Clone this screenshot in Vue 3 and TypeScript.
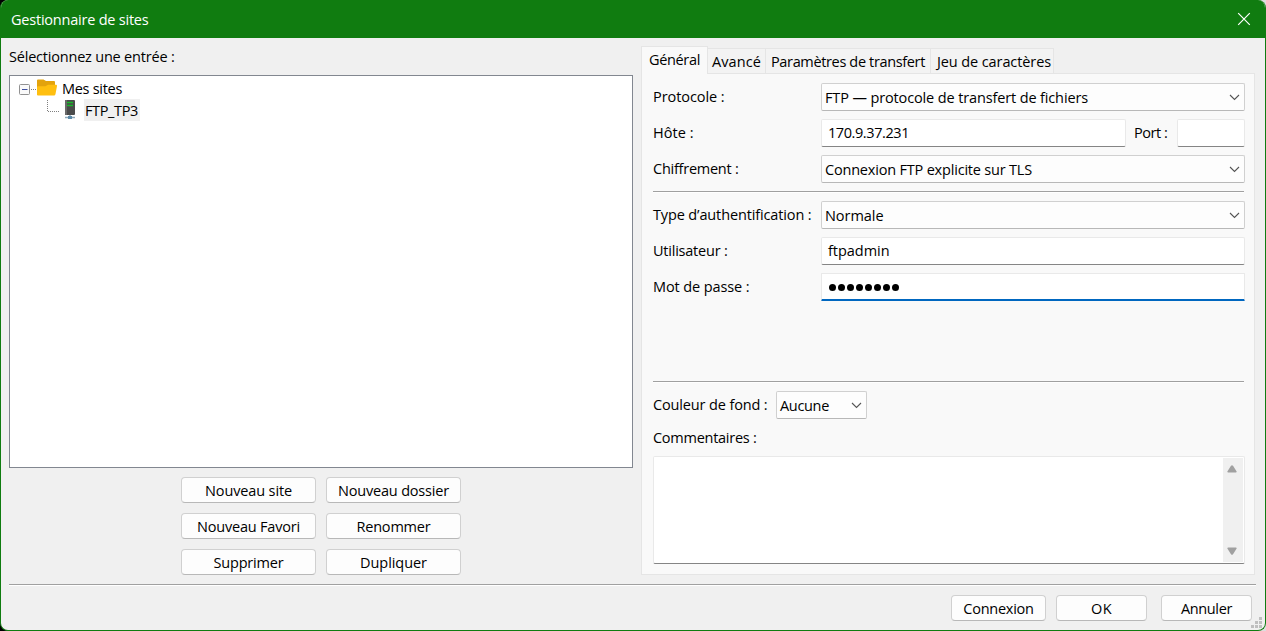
<script setup lang="ts">
import { ref } from 'vue'

interface Label { text: string; w: number }

const tabs: Label[] = [
  { text: 'Général', w: 51 },
  { text: 'Avancé', w: 49 },
  { text: 'Paramètres de transfert', w: 154 },
  { text: 'Jeu de caractères', w: 114 },
]
const activeTab = ref(0)

const siteActions: Label[] = [
  { text: 'Nouveau site', w: 87 },
  { text: 'Nouveau dossier', w: 111 },
  { text: 'Nouveau Favori', w: 103 },
  { text: 'Renommer', w: 74 },
  { text: 'Supprimer', w: 70 },
  { text: 'Dupliquer', w: 67 },
]

// Spreads or tightens a label so that it takes the given width.
const vFit = {
  mounted(el: HTMLElement, binding: { value: number }) {
    const natural = el.getBoundingClientRect().width
    const count = (el.textContent ?? '').length
    if (count) el.style.letterSpacing = `${(binding.value - natural) / count}px`
  },
}
</script>

<template>
  <div class="screen">
    <div class="window">
      <header class="titlebar">
        <span v-fit="137.500" class="t">Gestionnaire de sites</span>
        <svg class="close" width="14" height="14" viewBox="0 0 14 14"><path d="M1.2 1.2L12.8 12.8M12.8 1.2L1.2 12.8" /></svg>
      </header>

      <main class="content">
        <section class="left">
          <div class="prompt"><span v-fit="165.500" class="t">Sélectionnez une entrée :</span></div>
          <div class="tree">
            <div class="node root">
              <svg width="52" height="22" viewBox="0 0 52 22">
                <path class="dots" d="M21 12.5H27" />
                <rect x="9.5" y="7.500" width="10" height="10" rx="1" fill="#fafafa" stroke="#919191" />
                <path d="M12 12.500H17.500" stroke="#4050a0" />
                <path d="M27 3.500q0-1 1-1h5.500l2.500 1.500H44q1 0 1 1V18H28q-1 0-1-1z" fill="#e3a30d" />
                <path d="M27 10.200q0-1 1-1h7.500l2.500-1.500h8q1.200 0 1 1.200L45.500 17q-.3 1.500-1.500 1.500H28q-1 0-1-1.200z" fill="#ffbf10" />
              </svg>
              <span v-fit="60" class="t">Mes sites</span>
            </div>
            <div class="node child">
              <svg width="74" height="22" viewBox="0 0 74 22">
                <path class="dots" d="M37.500 1V12.500H50" />
                <rect x="55" y="1" width="10" height="15" rx="1" fill="#4b4b4b" />
                <rect x="55" y="1" width="2" height="15" fill="#6a6a6a" />
                <path d="M57 3.500H63M57 6.500H63" stroke="#18b92b" stroke-width="1.400" />
                <path d="M60 16V20M55 18.500H65" stroke="#8ba6b8" stroke-width="1.500" />
                <rect x="58" y="17" width="4" height="3" fill="#5b89a8" />
              </svg>
              <span class="selected"><span v-fit="53" class="t">FTP_TP3</span></span>
            </div>
          </div>
          <div class="actions">
            <button v-for="a in siteActions" :key="a.text" class="btn"><span v-fit="a.w" class="t">{{ a.text }}</span></button>
          </div>
        </section>

        <section class="right">
          <nav class="tabs">
            <div v-for="(tab, i) in tabs" :key="tab.text" class="tab" :class="[`tab${i}`, { active: i === activeTab }]" @click="activeTab = i">
              <span v-fit="tab.w" class="t">{{ tab.text }}</span>
            </div>
          </nav>
          <div class="panel">
            <div class="row">
              <label><span v-fit="71.500" class="t">Protocole :</span></label>
              <div class="select">
                <span v-fit="263" class="t">FTP — protocole de transfert de fichiers</span>
                <svg class="chev" width="11" height="7" viewBox="0 0 11 7"><path d="M1 1L5.500 5.500L10 1" /></svg>
              </div>
            </div>
            <div class="row">
              <label><span v-fit="40.500" class="t">Hôte :</span></label>
              <div class="input"><span v-fit="81" class="t">170.9.37.231</span></div>
              <span class="portlabel"><span v-fit="33.500" class="t">Port :</span></span>
              <div class="input port"></div>
            </div>
            <div class="row">
              <label><span v-fit="85.500" class="t">Chiffrement :</span></label>
              <div class="select">
                <span v-fit="207" class="t">Connexion FTP explicite sur TLS</span>
                <svg class="chev" width="11" height="7" viewBox="0 0 11 7"><path d="M1 1L5.500 5.500L10 1" /></svg>
              </div>
            </div>
            <div class="rule"></div>
            <div class="row">
              <label><span v-fit="158.500" class="t">Type d’authentification :</span></label>
              <div class="select">
                <span v-fit="58.500" class="t">Normale</span>
                <svg class="chev" width="11" height="7" viewBox="0 0 11 7"><path d="M1 1L5.500 5.500L10 1" /></svg>
              </div>
            </div>
            <div class="row">
              <label><span v-fit="74.500" class="t">Utilisateur :</span></label>
              <div class="input"><span v-fit="61.500" class="t">ftpadmin</span></div>
            </div>
            <div class="row">
              <label><span v-fit="96.500" class="t">Mot de passe :</span></label>
              <div class="input focused"><span class="dotrow"><i v-for="n in 8" :key="n"></i></span></div>
            </div>
            <div class="rule second"></div>
            <div class="row colour">
              <label><span v-fit="114.500" class="t">Couleur de fond :</span></label>
              <div class="select small">
                <span v-fit="49" class="t">Aucune</span>
                <svg class="chev" width="11" height="7" viewBox="0 0 11 7"><path d="M1 1L5.500 5.500L10 1" /></svg>
              </div>
            </div>
            <div class="comments"><span v-fit="103.500" class="t">Commentaires :</span></div>
            <div class="textarea">
              <div class="scroll">
                <svg width="10" height="8" viewBox="0 0 10 8"><path d="M4 .8Q5-.5 6 .8L9.500 6.200Q10 7.500 8.800 7.500H1.200Q0 7.500.5 6.200z" /></svg>
                <svg width="10" height="8" viewBox="0 0 10 8"><path d="M4 7.200Q5 8.500 6 7.200L9.500 1.800Q10 .5 8.800.5H1.200Q0 .5.5 1.800z" /></svg>
              </div>
            </div>
          </div>
        </section>
      </main>

      <div class="divider"></div>
      <footer class="footer">
        <button class="btn connect"><span v-fit="70.500" class="t">Connexion</span></button>
        <button class="btn ok"><span v-fit="21" class="t">OK</span></button>
        <button class="btn cancel"><span v-fit="51" class="t">Annuler</span></button>
      </footer>
      <svg class="grip" width="11" height="11" viewBox="0 0 11 11">
        <path d="M8 0h3v3h-3zM4 4h3v3h-3zM8 4h3v3h-3zM0 8h3v3h-3zM4 8h3v3h-3zM8 8h3v3h-3z" />
      </svg>
    </div>
  </div>
</template>

<style>
html, body { margin: 0; overflow: hidden; }
</style>

<style scoped>
* { box-sizing: border-box; }
.screen {
  width: 1266px;
  height: 631px;
  background: linear-gradient(90deg, #000 50%, #dedede 50%);
  font: 14.5px/20px "Open Sans", "Noto Sans", sans-serif;
  color: #000;
}
.t { display: inline-block; white-space: pre; }
.window {
  position: relative;
  width: 1266px;
  height: 631px;
  display: flex;
  flex-direction: column;
  border: 1px solid #107c10;
  border-top: 0;
  border-radius: 8px;
  overflow: hidden;
  background: #f0f0f0;
}
.titlebar {
  flex: none;
  height: 38px;
  display: flex;
  align-items: center;
  justify-content: space-between;
  padding: 1px 14px 0 10px;
  background: #107c10;
  color: #fff;
}
.close { fill: none; stroke: #fff; stroke-width: 1.2; margin-bottom: 1px; }
.content { flex: none; height: 546px; display: flex; padding-left: 8px; }
.left { width: 624px; display: flex; flex-direction: column; }
.prompt { height: 37px; padding-top: 9px; }
.tree { height: 393px; border: 1px solid #828790; background: #fff; padding-top: 1px; }
.node { display: flex; height: 22px; align-items: center; }
.node svg { flex: none; }
.root .t { padding-top: 2px; }
.dots { fill: none; stroke: #808080; stroke-dasharray: 1 1; }
.selected { height: 22px; background: #f0f0f0; padding: 2px 2px 0 1px; }
.actions {
  display: grid;
  grid-template-columns: 135px 135px;
  grid-auto-rows: 26px;
  gap: 10px;
  padding: 9px 0 0 172px;
}
.btn {
  display: flex;
  align-items: center;
  justify-content: center;
  height: 26px;
  padding: 1px 0 0;
  border: 1px solid #d0d0d0;
  border-bottom-color: #b8b8b8;
  border-radius: 4px;
  background: #fdfdfd;
  font: inherit;
  color: inherit;
}
.right { margin-left: 8px; width: 614px; padding-top: 8px; }
.tabs { height: 27px; display: flex; align-items: flex-end; }
.tab {
  height: 25px;
  padding: 3px 0 0 4px;
  border: 1px solid #e5e5e5;
  border-width: 1px 1px 0 0;
  background: #f3f3f3;
}
.tab0 { width: 67px; padding: 3px 0 0 7px; border-left-width: 1px; }
.tab1 { width: 58px; }
.tab2 { width: 165px; padding-left: 5px; }
.tab3 { width: 123px; padding-left: 6px; }
.tab.active { position: relative; height: 28px; margin-bottom: -1px; background: #f9f9f9; }
.panel {
  height: 502px;
  padding: 9px 9px 0 11px;
  border: 1px solid #e5e5e5;
  background: #f9f9f9;
}
.row { display: flex; height: 28px; margin-bottom: 8px; }
.row label { flex: none; width: 168px; padding-top: 4px; }
.select {
  flex: 1;
  display: flex;
  align-items: center;
  justify-content: space-between;
  padding: 2px 4px 0 3px;
  border: 1px solid #d0d0d0;
  border-bottom-color: #b8b8b8;
  border-radius: 2px;
  background: #fdfdfd;
}
.chev { fill: none; stroke: #555; stroke-width: 1.1; margin-bottom: 1px; }
.input {
  flex: 1;
  padding: 3px 0 0 6px;
  border: 1px solid #e9e9e9;
  border-bottom-color: #858585;
  border-radius: 2px;
  background: #fff;
}
.portlabel { width: 51px; padding: 4px 0 0 8px; }
.input.port { flex: none; width: 68px; }
.input.focused { border-bottom: 2px solid #0067c0; border-radius: 1px; }
.dotrow { display: flex; gap: 2px; padding: 7px 0 0 1px; }
.dotrow i { width: 7px; height: 7px; border-radius: 50%; background: #000; }
.rule { height: 2px; margin: 0 1px 8px 0; background: #a0a0a0; border-bottom: 1px solid #fff; }
.rule.second { margin: 80px 1px 8px 0; }
.row.colour label { width: 123px; }
.select.small { flex: none; width: 91px; }
.comments { height: 29px; padding-top: 1px; }
.textarea {
  display: flex;
  justify-content: flex-end;
  height: 108px;
  border: 1px solid #e9e9e9;
  border-bottom-color: #858585;
  border-radius: 2px;
  background: #fff;
}
.scroll {
  width: 20px;
  margin: 1px 1px 1px 0;
  padding: 7px 0 7px 4px;
  display: flex;
  flex-direction: column;
  justify-content: space-between;
  background: #f0f0f0;
}
.scroll svg { fill: #a0a0a0; }
.divider { flex: none; height: 2px; margin: 0 9px 0 8px; background: #a0a0a0; border-bottom: 1px solid #fff; }
.footer { display: flex; padding: 9px 0 0 950px; }
.connect { width: 95px; }
.ok { width: 91px; margin-left: 10px; }
.cancel { width: 91px; margin-left: 14px; }
.grip { position: absolute; right: 3px; bottom: 2px; fill: #bfbfbf; }
</style>
